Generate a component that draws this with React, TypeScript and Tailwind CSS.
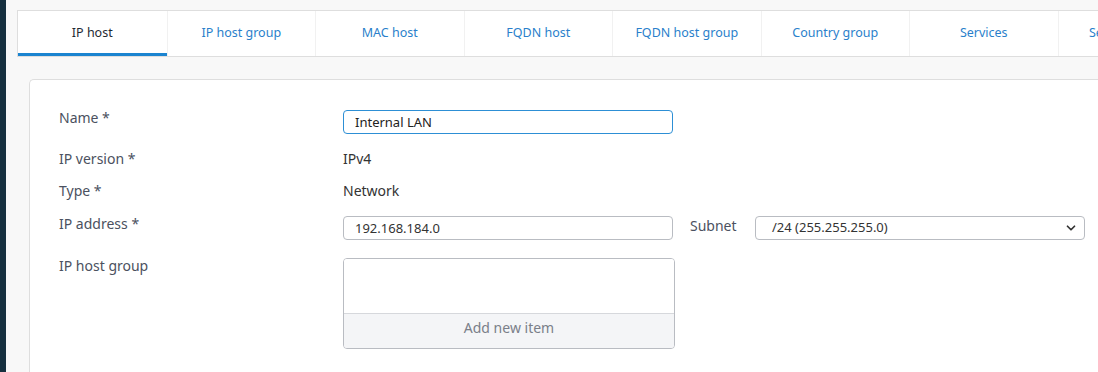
import { ChevronDown } from 'lucide-react';

const TABS = ['IP host', 'IP host group', 'MAC host', 'FQDN host', 'FQDN host group', 'Country group', 'Services', 'Services group'];

function Label({ children, raise }: { children: string; raise?: boolean }) {
  return (
    <div className={`w-[284px] shrink-0 text-[14px] text-[#4b5160] ${raise ? '-mt-[2px]' : ''}`}>{children}</div>
  );
}

export default function App() {
  return (
    <div className="flex h-[372px] w-[1098px] overflow-hidden bg-[#f8f8f8] font-['Noto_Sans',sans-serif]">
      <div className="w-[6px] shrink-0 bg-[#16303f]" />
      <div className="flex min-w-0 flex-1 flex-col pl-[11px] pt-[10px]">
        {/* tab strip */}
        <div className="flex h-[47px] shrink-0 border-y border-l border-[#dedede] bg-white">
          {TABS.map((t, i) => (
            <div
              key={t}
              className={`relative flex w-[148.5px] shrink-0 items-center justify-center whitespace-nowrap text-[12.5px] ${
                i === 0 ? 'text-[#1e2a33]' : 'border-l border-[#f1f1f1] text-[#2a7fcb]'
              }`}
            >
              {t}
              {i === 0 && <div className="absolute bottom-0 left-0 right-0 h-[3px] bg-[#1b84d0]" />}
            </div>
          ))}
        </div>

        {/* form panel */}
        <div className="ml-[12px] mt-[22px] flex-1 rounded-tl-[5px] border-l border-t border-[#dedede] bg-white pl-[29px] pt-[29px]">
          <div className="flex items-start">
            <Label raise>Name *</Label>
            <input
              defaultValue="Internal LAN"
              className="mt-[1px] h-[24px] w-[330px] rounded-[4px] border border-[#2d8fd5] px-[11px] text-[13px] text-[#222] outline-none"
            />
          </div>

          <div className="mt-[14px] flex items-center">
            <Label>IP version *</Label>
            <span className="text-[14px] text-[#333]">IPv4</span>
          </div>

          <div className="mt-[11px] flex items-center">
            <Label>Type *</Label>
            <span className="text-[14px] text-[#333]">Network</span>
          </div>

          <div className="mt-[14px] flex items-start">
            <Label raise>IP address *</Label>
            <input
              defaultValue="192.168.184.0"
              className="mt-[1px] h-[24px] w-[330px] rounded-[4px] border border-[#b9bcc2] px-[11px] text-[13px] text-[#333] outline-none"
            />
            <span className="ml-[17px] w-[65px] text-[14px] text-[#4b5160]">Subnet</span>
            <div className="mt-[1px] flex h-[24px] w-[330px] items-center rounded-[4px] border border-[#b9bcc2] pl-[16px] pr-[6px] text-[13px] text-[#333]">
              <span className="flex-1">/24 (255.255.255.0)</span>
              <ChevronDown className="h-[14px] w-[14px] text-[#333]" strokeWidth={3} />
            </div>
          </div>

          <div className="mt-[17px] flex items-start">
            <Label raise>IP host group</Label>
            <div className="mt-[1px] flex h-[91px] w-[332px] flex-col overflow-hidden rounded-[4px] border border-[#b9bcc2]">
              <div className="flex-1 bg-white" />
              <div className="flex h-[35px] items-center justify-center border-t border-[#d6d8dc] bg-[#f4f5f7] pb-[7px] text-[14px] text-[#7a7f89]">
                Add new item
              </div>
            </div>
          </div>
        </div>
      </div>
    </div>
  );
}
